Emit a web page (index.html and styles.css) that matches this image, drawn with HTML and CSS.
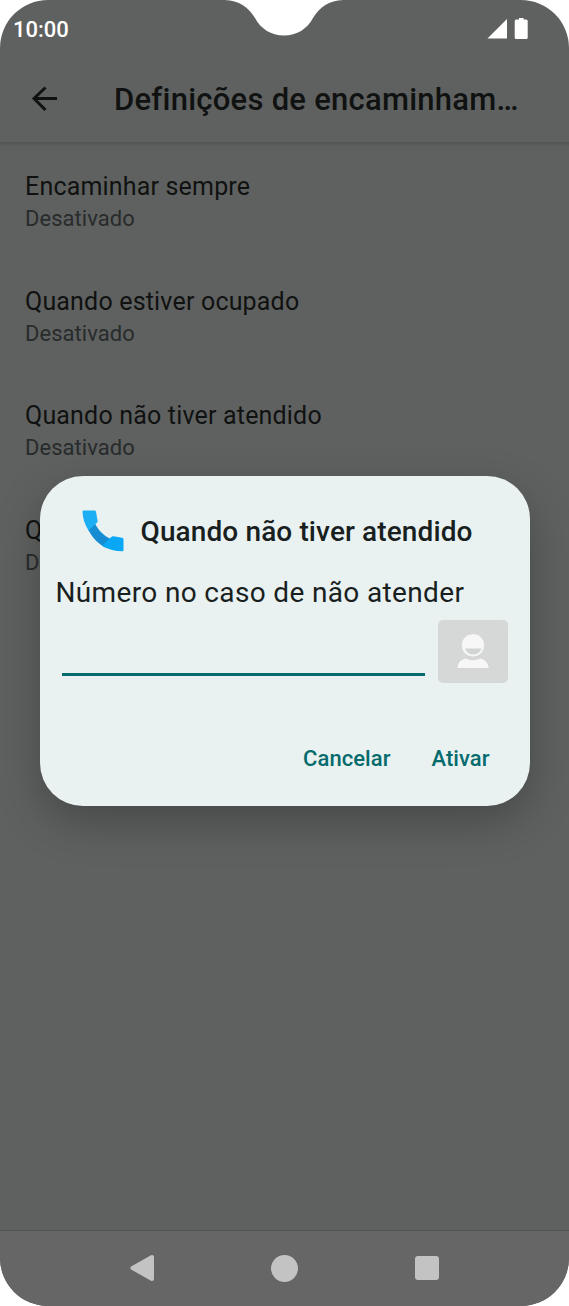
FILE: index.html
```html
<!DOCTYPE html>
<html lang="pt">

<head>
    <meta charset="UTF-8">
    <title>Definições de encaminhamento</title>
    <link rel="stylesheet" href="styles.css">
</head>

<body>
    <div class="phone">
        <svg class="notch" width="118" height="36" viewBox="0 0 118 36">
            <path d="M0 0C14 1 23 6.500 30 18C36 29 46 35.500 59 35.500C72 35.500 82 29 88 18C95 6.500 104 1 118 0Z" fill="#fff"/>
        </svg>
        <div class="status">
            <span class="time">10:00</span>
            <svg class="status-icons" width="42" height="22" viewBox="0 0 42 22">
                <path d="M0.500 21.500L20 2V21.500Z" fill="#fff"/>
                <path d="M32 1h4.500v1.500h2.700q1.500 0 1.500 1.500v16.500q0 1.500-1.500 1.500h-10q-1.500 0-1.500-1.500v-16.500q0-1.500 1.500-1.500h2.800z" fill="#fff"/>
            </svg>
        </div>
        <div class="appbar">
            <svg class="back" width="26" height="26" viewBox="0 0 26 26">
                <path d="M26 12.500H3M14.500 1.500L3 12.500L14.500 24" fill="none" stroke="#101211" stroke-width="3"/>
            </svg>
            <h1 class="title">Definições de encaminham…</h1>
        </div>
        <ul class="list">
            <li><p class="name">Encaminhar sempre</p><p class="state">Desativado</p></li>
            <li><p class="name">Quando estiver ocupado</p><p class="state">Desativado</p></li>
            <li><p class="name">Quando não tiver atendido</p><p class="state">Desativado</p></li>
            <li><p class="name">Quando</p><p class="state">Desativado</p></li>
        </ul>
        <div class="navbar">
            <svg width="26" height="28" viewBox="0 0 26 28">
                <path d="M3.500 14L23 3V25Z" fill="#c3c3c3" stroke="#c3c3c3" stroke-width="4" stroke-linejoin="round"/>
            </svg>
            <span class="home"></span>
            <span class="recent"></span>
        </div>

        <div class="dialog">
            <div class="dialog-head">
                <svg width="42" height="42" viewBox="0 0 42 42">
                    <path d="M6 19.500C10.500 28 17 34.500 24 38L28 28.500C21 25 16.500 20.500 13 13.500Z" fill="#168dd3"/>
                    <path d="M1.500 0.500H12.500Q13.800 0.500 14 1.700L15.600 11Q15.800 12 14.900 12.800L6.500 20.500C2.500 14 0.700 8 0.500 1.500Q0.500 0.500 1.500 0.500Z" fill="#1daff3"/>
                    <path d="M21.500 34.500L29.300 27Q30.300 26 31.500 26.200L40 27.700Q41.500 28 41.500 29.500V40Q41.500 41.300 40.300 41.300C33 41.200 27 39.500 20 35.700Z" fill="#0aa8f4"/>
                </svg>
                <h2 class="dialog-title">Quando não tiver atendido</h2>
            </div>
            <p class="label">Número no caso de não atender</p>
            <div class="field">
                <input class="number" type="text">
                <button class="contact">
                    <svg width="34" height="38" viewBox="0 0 34 38">
                        <path d="M0.700 35.500C1.500 29.500 4.500 26.500 9.500 25Q17 28.500 24.500 25C29.500 26.500 32.500 29.500 33.300 35.500Z" fill="#f7f7f7" stroke="#c9caca" stroke-width=".6"/>
                        <circle cx="17" cy="12.300" r="11.700" fill="#f7f7f7" stroke="#c9caca" stroke-width=".6"/>
                        <path d="M9 15.500H25.500C24 19.500 21 21.500 17.200 21.500C13.500 21.500 10.500 19.500 9 15.500Z" fill="#d2d3d3"/>
                    </svg>
                </button>
            </div>
            <div class="actions">
                <a href="javascript:;">Cancelar</a>
                <a href="javascript:;">Ativar</a>
            </div>
        </div>
    </div>
</body>

</html>
```
FILE: styles.css
```css
* {
    margin: 0;
    padding: 0;
    box-sizing: border-box;
    list-style: none;
    text-decoration: none;
}

body {
    background-color: #fff;
    font-family: Roboto, "Liberation Sans", sans-serif;
}

.phone {
    position: relative;
    display: flex;
    flex-direction: column;
    width: 569px;
    height: 1306px;
    border-radius: 48px;
    background-color: #5f6160;
    overflow: hidden;
}

.notch {
    position: absolute;
    left: 225px;
    top: 0;
}

.status {
    display: flex;
    justify-content: space-between;
    height: 60px;
    padding: 17px 40px 0 13px;
}

.time {
    line-height: 26px;
    font-size: 22px;
    font-weight: 500;
    color: #fff;
}

.appbar {
    display: flex;
    align-items: center;
    height: 82px;
    padding: 0 40px 4px 31px;
}

.title {
    flex: 1;
    margin-left: 57px;
    padding-top: 2px;
    font-size: 31px;
    line-height: 40px;
    font-weight: 500;
    letter-spacing: .25px;
    color: #101211;
    white-space: nowrap;
}

.list {
    flex: 1;
    padding: 29px 25px 0;
    background-image: linear-gradient(#525453, #5f6160 5px);
}

.list li {
    height: 114.7px;
}

.name {
    font-size: 25px;
    line-height: 32px;
    letter-spacing: .18px;
    color: #101211;
}

.state {
    font-size: 22px;
    line-height: 31px;
    letter-spacing: .05px;
    color: #282b2b;
}

.navbar {
    display: flex;
    align-items: center;
    justify-content: center;
    gap: 116.5px;
    height: 76px;
    padding: 0 2px 1px 0;
    border-top: 1px solid #525453;
    background-color: #666;
}

.home {
    width: 27px;
    height: 27px;
    border-radius: 50%;
    background-color: #c3c3c3;
}

.recent {
    width: 24px;
    height: 24px;
    border-radius: 3px;
    background-color: #c3c3c3;
}

.dialog {
    position: absolute;
    left: 39.5px;
    top: 476.3px;
    width: 490px;
    height: 330px;
    padding: 34px 22px 0 16px;
    border-radius: 43px;
    background-color: #e9f2f1;
    box-shadow: 0 16px 44px rgba(0, 0, 0, .25);
}

.dialog-head {
    display: flex;
    align-items: center;
    gap: 17px;
    height: 42px;
    padding-left: 26px;
}

.dialog-title {
    font-size: 28px;
    font-weight: 500;
    letter-spacing: .11px;
    color: #191f1f;
    white-space: nowrap;
}

.label {
    margin-top: 23px;
    font-size: 28px;
    line-height: 36px;
    letter-spacing: .35px;
    color: #191f1f;
    white-space: nowrap;
}

.field {
    display: flex;
    justify-content: space-between;
    margin-top: 9px;
    padding-left: 6px;
}

.number {
    width: 363px;
    height: 56px;
    border: none;
    border-bottom: 3px solid #056b6d;
    background: none;
    outline: none;
    font-size: 28px;
}

.contact {
    display: flex;
    align-items: center;
    justify-content: center;
    width: 70px;
    height: 63px;
    border: none;
    border-radius: 5px;
    background-color: #d6d8d7;
}

.actions {
    display: flex;
    justify-content: flex-end;
    gap: 41px;
    margin-top: 61px;
    padding-right: 18px;
}

.actions a {
    font-size: 22px;
    line-height: 30px;
    font-weight: 500;
    letter-spacing: .05px;
    color: #056b6d;
}
```
